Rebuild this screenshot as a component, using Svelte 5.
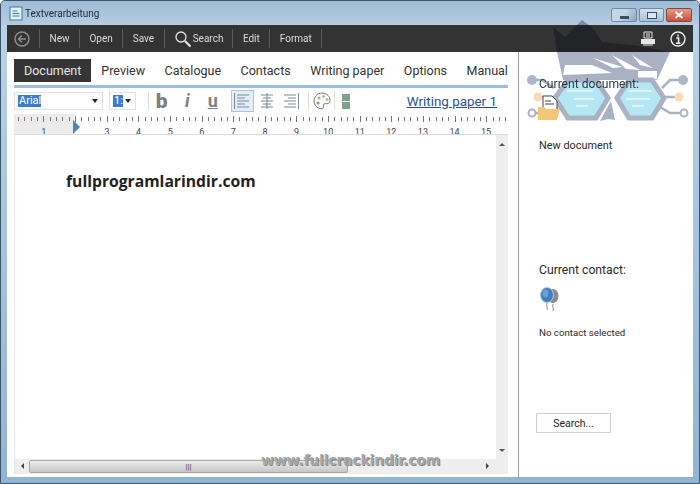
<script>
  const menu = ['New', 'Open', 'Save'];
  const tabs = ['Preview', 'Catalogue', 'Contacts', 'Writing paper', 'Options', 'Manual'];
  const numbers = Array.from({ length: 15 }, (_, i) => i + 1);
  const ticks = Array.from({ length: 78 }, (_, i) => i);
</script>

<div class="window">
  <header class="titlebar">
    <svg class="appicon" viewBox="0 0 14 15" width="14" height="15">
      <rect x="1" y="1" width="12" height="13" fill="#e8f2fb" stroke="#3a76ad" />
      <path d="M3.500 5h5M3.500 7.500h7M3.500 10h7" stroke="#3a76ad" fill="none" />
    </svg>
    <span class="title">Textverarbeitung</span>
    <div class="controls">
      <span class="ctl min"><i></i></span>
      <span class="ctl max"><i></i></span>
      <span class="ctl close">
        <svg viewBox="0 0 10 8" width="10" height="8"><path d="M1.500 1l7 6M8.500 1l-7 6" stroke="#fff" stroke-width="2" /></svg>
      </span>
    </div>
  </header>

  <div class="frame">
    <nav class="toolbar">
      <span class="tool back">
        <svg viewBox="0 0 16 16" width="16" height="16">
          <circle cx="8" cy="8" r="7" fill="none" stroke="#8d8d8d" stroke-width="1.500" />
          <path d="M12 8H5M8 4.500L4.500 8 8 11.500" fill="none" stroke="#8d8d8d" stroke-width="1.500" />
        </svg>
      </span>
      {#each menu as item}
        <span class="tool">{item}</span>
      {/each}
      <span class="tool search">
        <svg viewBox="0 0 18 18" width="18" height="18">
          <circle cx="7" cy="7" r="5" fill="none" stroke="#e4e4e4" stroke-width="1.300" />
          <path d="M11 11l5.500 5.500" stroke="#e4e4e4" stroke-width="2.200" />
        </svg>
        Search
      </span>
      <span class="tool">Edit</span>
      <span class="tool">Format</span>
      <span class="toolend">
        <svg viewBox="0 0 16 16" width="16" height="16">
          <path d="M4 1h8v6H4z" fill="none" stroke="#e6e6e6" />
          <path d="M6 3h4M6 5h4" stroke="#e6e6e6" />
          <path d="M1 8h14v5H1z" fill="#e6e6e6" />
          <path d="M3 14h10" stroke="#e6e6e6" />
        </svg>
        <svg viewBox="0 0 16 16" width="16" height="16">
          <circle cx="8" cy="8" r="7" fill="none" stroke="#f0f0f0" stroke-width="1.400" />
          <path d="M8 3.500v2M6.300 7H8.600v5M6 12.300h4.500" fill="none" stroke="#f0f0f0" stroke-width="1.500" />
        </svg>
      </span>
    </nav>

    <div class="content">
      <main class="main">
        <div class="tabs">
          <span class="tab active">Document</span>
          {#each tabs as tab}
            <span class="tab">{tab}</span>
          {/each}
        </div>
        <div class="accent"></div>

        <div class="format">
          <div class="select fontsel"><span class="sel">Arial</span><b class="caret"></b></div>
          <div class="select sizesel"><span class="sel">1:</span><b class="caret"></b></div>
          <span class="vsep first"></span>
          <span class="fmt bold">b</span>
          <span class="fmt ital">i</span>
          <span class="fmt under">u</span>
          <div class="aligns">
            <span class="align on">
              <svg viewBox="0 0 16 16" width="16" height="16"><path d="M.5 0v16M3 2h12M3 5h8M3 8h12M3 11h8M3 14h12" stroke="#7a8794" fill="none" /></svg>
            </span>
            <span class="align">
              <svg viewBox="0 0 16 16" width="16" height="16"><path d="M8 0v16M2 2h12M4 5h8M2 8h12M4 11h8M2 14h12" stroke="#7a8794" fill="none" /></svg>
            </span>
            <span class="align">
              <svg viewBox="0 0 16 16" width="16" height="16"><path d="M15.500 0v16M1 2h12M5 5h8M1 8h12M5 11h8M1 14h12" stroke="#7a8794" fill="none" /></svg>
            </span>
          </div>
          <span class="vsep sep2"></span>
          <svg class="palette" viewBox="0 0 18 18" width="18" height="18">
            <path d="M9 1c5 0 8 3.500 8 7.500 0 3-2.500 3.500-4.500 3.200-1.800-.2-2.500 1-2 2.300.5 1.500-.5 3-2.500 2.800C4 16.300 1 13 1 9s3.500-8 8-8z" fill="#fbfbf6" stroke="#777" />
            <circle cx="6" cy="6" r="1.500" fill="#c9a08a" />
            <circle cx="10.500" cy="4.500" r="1.300" fill="#8fb3c9" />
            <circle cx="14" cy="7.500" r="1.300" fill="#a5b98c" />
            <circle cx="5" cy="11" r="1.500" fill="#999" />
          </svg>
          <span class="vsep sep3"></span>
          <span class="swatch"><i></i><i></i></span>
          <span class="link">Writing paper 1</span>
        </div>

        <div class="ruler">
          <div class="margin"></div>
          <div class="ticks">
            {#each ticks as t}
              <i class:long={t % 5 === 4}></i>
            {/each}
          </div>
          <div class="nums">
            {#each numbers as n}
              <span>{n}</span>
            {/each}
          </div>
          <svg class="marker" viewBox="0 0 7 14" width="7" height="14"><path d="M0 0l7 7-7 7z" fill="#4a84b8" /></svg>
        </div>

        <div class="editorwrap">
          <div class="editor"><p>fullprogramlarindir.com</p></div>
          <div class="vscroll"><b class="up"></b><b class="down"></b></div>
          <div class="hscroll">
            <b class="left"></b>
            <div class="thumb"><span>|||</span></div>
            <b class="right"></b>
          </div>
          <div class="corner"></div>
        </div>
      </main>

      <aside class="side">
        <h2 class="doc">Current document:</h2>
        <svg class="folder" viewBox="0 0 24 26" width="24" height="26">
          <path d="M6 1h9l5 5v9H6z" fill="#fff" stroke="#444" />
          <path d="M8 6h6M8 9h9" stroke="#444" />
          <path d="M1 12h6l2 2h14l-3 11H1z" fill="#f2c777" />
        </svg>
        <p class="sub newdoc">New document</p>
        <h2 class="contact">Current contact:</h2>
        <svg class="balloons" viewBox="0 0 20 26" width="20" height="26">
          <ellipse cx="14" cy="9" rx="5.500" ry="7" fill="#8b8b8b" />
          <ellipse cx="8" cy="8" rx="6.500" ry="7.500" fill="#3f7ec0" stroke="#a6c8e8" />
          <ellipse cx="6.500" cy="6.500" rx="3" ry="4" fill="#6f9fd2" />
          <path d="M8 16c-1 3 1 4 0 7M14 17c-1 3 1 4 0 7" stroke="#7a8ea3" fill="none" />
        </svg>
        <p class="sub nocontact">No contact selected</p>
        <button class="searchbtn" type="button">Search...</button>
      </aside>
    </div>
  </div>

  <svg class="hairshape" viewBox="525 15 170 70" width="170" height="70">
    <polygon points="553,27 565,37 582,20 593,28 602,42 640,46 670,52 657,80 563,80 557,52" fill="#a9b1c2" />
  </svg>
  <svg class="logo" viewBox="525 15 170 115" width="170" height="115">
    <path d="M565 65h27l20 8-49 2zM593 58l30 9-10 1zM612 55l28 15-14-1zM632 55l21 13-13-3zM638 71h19v8h-19z" fill="#fff" />
    <g fill="none" stroke="#a9b1c2" stroke-width="2.500">
      <path d="M532 80l10 0 12 8M538 97h16M532 113h16l10-5" />
      <path d="M682 80h-12l-8 8M680 97h-16M682 113h-12l-10-6" />
    </g>
    <polygon points="555,98 568,80 596,80 608,98 596,118 568,118" fill="#b5e6f4" stroke="#a9b1c2" stroke-width="5" />
    <polygon points="617,98 629,80 652,80 664,98 652,118 629,118" fill="#b5e6f4" stroke="#a9b1c2" stroke-width="5" />
    <path d="M567 91h26M574 99h20M576 106h12M628 91h24M626 99h24M632 106h12" stroke="#e9f8fc" stroke-width="1.500" />
    <path d="M600 121l11-20 4 19-7-1z" fill="#a9b1c2" />
    <circle cx="532" cy="80" r="5" fill="#b0b6c8" />
    <circle cx="538" cy="97" r="4.500" fill="#fbd9b5" />
    <circle cx="532" cy="113" r="3.500" fill="#fff" stroke="#a9b1c2" stroke-width="2" />
    <circle cx="683" cy="80" r="5" fill="#b0b6c8" />
    <circle cx="679" cy="97" r="4.500" fill="#fbd9b5" />
    <circle cx="684" cy="113" r="3.500" fill="#fff" stroke="#a9b1c2" stroke-width="2" />
  </svg>
  <div class="stamp">www.fullcrackindir.com</div>
</div>

<style>
  :global(body) {
    margin: 0;
    background: #fff;
  }
  .window {
    position: relative;
    width: 700px;
    height: 484px;
    box-sizing: border-box;
    display: flex;
    flex-direction: column;
    overflow: hidden;
    background: linear-gradient(180deg, #a9c4de 0, #b9d2e8 25px, #8fb4d4 100%);
    border: 1px solid #3f5568;
    border-radius: 5px 5px 0 0;
    font-family: Roboto, "Open Sans", sans-serif;
    color: #222;
    filter: blur(0.25px);
  }
  .titlebar {
    height: 24px;
    flex: none;
    display: flex;
    align-items: center;
    padding: 0 7px 0 8px;
    gap: 2px;
    background: linear-gradient(180deg, #9fbbd6 0, #b5cde2 100%);
  }
  .title {
    font-size: 10px;
    color: #1c2a36;
  }
  .controls {
    margin-left: auto;
    display: flex;
    gap: 2px;
    align-self: flex-start;
    margin-top: 7px;
  }
  .ctl {
    width: 25px;
    height: 14px;
    border: 1px solid #6d8aa6;
    border-radius: 2px;
    display: flex;
    align-items: center;
    justify-content: center;
    background: linear-gradient(180deg, #d3e2ef, #a8c2da);
    box-sizing: border-box;
  }
  .ctl.min {
    width: 26px;
    background: linear-gradient(120deg, #c4d6e6 50%, #8ea4b8 100%);
  }
  .ctl.min i {
    width: 9px;
    height: 3px;
    background: #3c4e60;
    margin-top: 5px;
  }
  .ctl.max i {
    width: 8px;
    height: 5px;
    border: 1.500px solid #3c4e60;
    background: #dbe8f2;
  }
  .ctl.close {
    width: 26px;
    background: linear-gradient(180deg, #e49a88, #c8503a);
    border-color: #8e4638;
  }
  .frame {
    flex: 1;
    margin: 0 6px 6px;
    display: flex;
    flex-direction: column;
    min-height: 0;
  }
  .toolbar {
    height: 27px;
    flex: none;
    display: flex;
    align-items: center;
    background: #333333;
    color: #dcdcdc;
    font-size: 10px;
  }
  .tool {
    height: 19px;
    display: flex;
    align-items: center;
    gap: 1px;
    padding: 0 9.500px;
    border-right: 1px solid #5c5c5c;
  }
  .tool.back {
    width: 33px;
    box-sizing: border-box;
    padding: 0 0 0 7px;
  }
  .tool.search {
    padding: 0 9px;
  }
  .toolend {
    margin-left: auto;
    display: flex;
    gap: 14px;
    padding-right: 7px;
    align-items: center;
  }
  .content {
    flex: 1;
    min-height: 0;
    display: flex;
    background: #fff;
  }
  .main {
    width: 512px;
    flex: none;
    box-sizing: border-box;
    padding: 7px 4px 3px 7px;
    border-right: 1px solid #9a9a9a;
    display: flex;
    flex-direction: column;
    min-height: 0;
  }
  .tabs {
    display: flex;
    height: 23px;
    align-items: center;
    font-size: 12.500px;
    color: #333;
    gap: 19.500px;
    white-space: nowrap;
  }
  .tab.active {
    background: #353535;
    color: #e6e6e6;
    height: 23px;
    line-height: 23px;
    padding: 0 10px;
    margin-right: -9.500px;
  }
  .accent {
    height: 3px;
    margin-top: 3px;
    background: #9dbde0;
    width: 494px;
  }
  .format {
    height: 26px;
    flex: none;
    width: 494px;
    display: flex;
    align-items: center;
  }
  .select {
    height: 18px;
    box-sizing: border-box;
    border: 1px solid #e2e2e2;
    display: flex;
    align-items: center;
    justify-content: space-between;
    font-size: 11px;
    padding: 0 4px 0 3px;
  }
  .fontsel { width: 89px; margin-right: 6px; }
  .sizesel { width: 27px; }
  .sel {
    background: #3b7bd4;
    color: #fff;
    height: 12px;
    line-height: 12px;
    padding: 0 0 0 1px;
  }
  .caret {
    width: 0;
    height: 0;
    border: 3.500px solid transparent;
    border-top: 4px solid #222;
    border-bottom: 0;
  }
  .vsep {
    width: 1px;
    height: 18px;
    background: #ddd;
  }
  .vsep.first { margin: 0 0 0 12px; }
  .vsep.sep2 { margin: 0 4px 0 4px; }
  .vsep.sep3 { margin: 0 7px 0 3px; }
  .fmt {
    width: 25.500px;
    text-align: center;
    color: #7f7f7f;
    line-height: 18px;
  }
  .bold {
    font-size: 21px;
    font-weight: 900;
  }
  .ital { font-size: 18px; font-style: italic; font-weight: 700; }
  .under {
    font-size: 18px;
    font-weight: 700;
    text-decoration: underline;
  }
  .aligns {
    display: flex;
    margin-left: 5px;
  }
  .align {
    width: 23px;
    height: 22px;
    box-sizing: border-box;
    display: flex;
    align-items: center;
    justify-content: center;
    margin-right: 1.500px;
  }
  .align.on {
    background: #e4eef8;
    border: 1px solid #a9c5e3;
  }
  .palette { margin: 0; }
  .swatch {
    display: flex;
    flex-direction: column;
    gap: 1px;
  }
  .swatch i {
    width: 8px;
    height: 7px;
    background: #7ea08e;
  }
  .link {
    margin-left: auto;
    margin-right: 11px;
    font-size: 13.400px;
    color: #2a4f9a;
    text-decoration: underline;
  }
  .ruler {
    position: relative;
    width: 494px;
    height: 21px;
    flex: none;
    overflow: hidden;
    border-bottom: 1px solid #dcdcdc;
    box-sizing: border-box;
  }
  .margin {
    position: absolute;
    left: 0;
    top: 0;
    bottom: 0;
    width: 60px;
    background: #ececec;
  }
  .ticks {
    position: absolute;
    left: 4px;
    top: 3px;
    display: flex;
    gap: 5.330px;
  }
  .ticks i {
    width: 1px;
    height: 4px;
    background: #777;
    flex: none;
  }
  .ticks i.long { height: 6px; margin-top: -1px; }
  .nums {
    position: absolute;
    left: 14px;
    top: 13px;
    display: flex;
    font-size: 9px;
    color: #444;
  }
  .nums span {
    width: 31.600px;
    text-align: center;
    flex: none;
  }
  .nums span:nth-child(2) { visibility: hidden; }
  .marker {
    position: absolute;
    left: 59px;
    top: 6px;
  }
  .editorwrap {
    flex: 1;
    width: 494px;
    min-height: 0;
    display: grid;
    grid-template-columns: 1fr 12px;
    grid-template-rows: 1fr 15px;
    border-left: 1px solid #e5e5e5;
    box-sizing: border-box;
  }
  .editor {
    padding: 35px 0 0 51px;
  }
  .editor p {
    margin: 0;
    font-family: "Open Sans", sans-serif;
    font-size: 15.700px;
    font-weight: 700;
    color: #222;
  }
  .vscroll {
    background: #eeeeee;
    position: relative;
  }
  .up, .down, .left, .right {
    position: absolute;
    width: 0;
    height: 0;
    border: 3px solid transparent;
  }
  .up {
    left: 3px;
    top: 8px;
    border-bottom-color: #555;
    border-top: 0;
  }
  .down {
    left: 3px;
    bottom: 7px;
    border-top-color: #555;
    border-bottom: 0;
  }
  .hscroll {
    position: relative;
    background: #eeeeee;
  }
  .left {
    left: 6px;
    top: 4px;
    border-right-color: #444;
    border-left: 0;
  }
  .right {
    right: 7px;
    top: 4px;
    border-left-color: #444;
    border-right: 0;
  }
  .thumb {
    position: absolute;
    left: 14px;
    right: 148px;
    top: 1px;
    height: 11px;
    border: 1px solid #a8a8a8;
    border-radius: 2px;
    background: linear-gradient(180deg, #ececec, #c6c6c6);
    font-size: 8px;
    line-height: 11px;
    text-align: center;
    color: #444;
  }
  .corner { background: #eeeeee; }
  .side {
    flex: 1;
    min-width: 0;
    display: flex;
    flex-direction: column;
    padding-left: 20px;
    color: #2a2a2a;
  }
  h2 {
    margin: 0;
    font-weight: 400;
    line-height: 16px;
  }
  .doc {
    margin-top: 24px;
    font-size: 12.100px;
    position: relative;
    z-index: 3;
    white-space: nowrap;
    color: #2a3a44;
  }
  .folder { margin-top: 3px; position: relative; z-index: 3; margin-left: -2px; }
  .sub {
    margin: 0;
    line-height: 14px;
    white-space: nowrap;
  }
  .newdoc { margin-top: 18px; font-size: 10.900px; }
  .contact { margin-top: 109px; font-size: 12.200px; }
  .balloons { margin-top: 9px; }
  .nocontact { margin-top: 13px; font-size: 9.700px; }
  .searchbtn {
    width: 75px;
    height: 20px;
    margin-top: 73px;
    margin-left: -3px;
    padding: 0;
    background: #fff;
    border: 1px solid #cfcfcf;
    font-family: inherit;
    font-size: 10.500px;
    color: #222;
  }
  .hairshape {
    position: absolute;
    left: 524px;
    top: 14px;
    mix-blend-mode: multiply;
  }
  .logo {
    position: absolute;
    left: 524px;
    top: 14px;
    pointer-events: none;
  }
  .stamp {
    position: absolute;
    left: 260px;
    top: 451px;
    font-family: "DejaVu Sans", sans-serif;
    font-size: 14px;
    font-weight: 700;
    color: #a8a8a8;
    text-shadow: 1px 1px 0 #8a8a8a;
    letter-spacing: -0.2px;
  }
</style>
